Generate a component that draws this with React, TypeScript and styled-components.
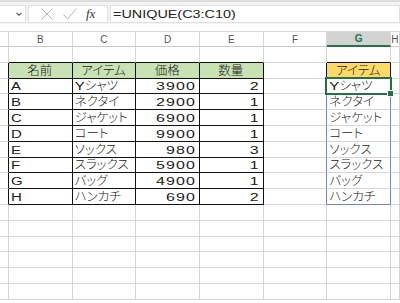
import React from "react";
import styled, { createGlobalStyle } from "styled-components";

const COLUMNS = ["", "B", "C", "D", "E", "F", "G", "H"];
const ROW_COUNT = 16;
const GRID = "#d6d6d6";
const INK = "#111";
const SPILL = "#6a86d2";
const EXCEL_GREEN = "#217346";

const items = [
  ["A", "Yシャツ", "3900", "2"],
  ["B", "ネクタイ", "2900", "1"],
  ["C", "ジャケット", "6900", "1"],
  ["D", "コート", "9900", "1"],
  ["E", "ソックス", "980", "3"],
  ["F", "スラックス", "5900", "1"],
  ["G", "バッグ", "4900", "1"],
  ["H", "ハンカチ", "690", "2"],
];

type Align = "left" | "center" | "right";
type CellData = { text?: string; align?: Align; fill?: string };

// row 1..16, col 0..7 (A..H)
const cellAt = (r: number, c: number): CellData => {
  if (r === 2 && c >= 1 && c <= 4)
    return { text: ["名前", "アイテム", "価格", "数量"][c - 1], align: "center", fill: "#c9e2b4" };
  if (r === 2 && c === 6) return { text: "アイテム", align: "center", fill: "#ffd966" };
  if (r >= 3 && r <= 10) {
    const item = items[r - 3];
    if (c >= 1 && c <= 4) return { text: item[c - 1], align: c >= 3 ? "right" : "left" };
    if (c === 6) return { text: item[1], align: "left" };
  }
  return {};
};

const inTable = (r: number, c: number) => (r >= 2 && r <= 10 && c >= 1 && c <= 4) || (r === 2 && c === 6);
const inSpill = (r: number, c: number) => r >= 3 && r <= 10 && c === 6;

const rightEdge = (r: number, c: number) => {
  if (inTable(r, c) || inTable(r, c + 1)) return INK;
  if (inSpill(r, c) || inSpill(r, c + 1)) return SPILL;
  return GRID;
};

const bottomEdge = (r: number, c: number) => {
  if (inTable(r, c) || inTable(r + 1, c)) return INK;
  if (inSpill(r, c) && r === 10) return SPILL;
  return GRID;
};

const GlobalStyle = createGlobalStyle`
  body {
    margin: 0;
    background: #fff;
    font-family: "Liberation Sans", "Noto Sans CJK JP", sans-serif;
  }
`;

const Page = styled.div`
  width: 400px;
  height: 303px;
  overflow: hidden;
  background: #fff;
`;

const FormulaBar = styled.div`
  display: flex;
  gap: 2px;
  height: 24px;
  box-sizing: border-box;
  padding: 3px 0 1px;
  background: #f3f3f3;
  border-top: 2px solid #dcdcdc;
`;

const Box = styled.div<{ $width?: number }>`
  display: flex;
  align-items: center;
  box-sizing: border-box;
  background: #fff;
  border: 1px solid #e0e0e0;
  ${(p) => (p.$width ? `width: ${p.$width}px; flex: none;` : "flex: 1;")}
`;

const NameBox = styled(Box)`
  justify-content: flex-end;
  padding-right: 3px;
  margin-left: -1px;
`;

const ButtonBox = styled(Box)`
  padding-left: 6px;
`;

const IconSlot = styled.span`
  display: flex;
  align-items: center;
  justify-content: center;
  width: 23px;
  height: 14px;
`;

const Fx = styled.span`
  margin-left: 5px;
  font-family: "Liberation Serif", serif;
  font-style: italic;
  font-size: 13px;
  color: #333;
`;

const FormulaText = styled.span`
  display: inline-block;
  margin-left: 2px;
  font-size: 14.4px;
  color: #222;
  transform: scaleY(0.74);
  white-space: nowrap;
`;

const Gap = styled.div`
  height: 7px;
`;

const Sheet = styled.div`
  display: grid;
  grid-template-columns: 9px repeat(6, 63.67px) 1fr;
  grid-template-rows: 16px repeat(${ROW_COUNT}, 15.8px);
`;

const ColHead = styled.div<{ $active?: boolean }>`
  display: flex;
  align-items: center;
  justify-content: center;
  box-sizing: border-box;
  border-top: 1px solid ${GRID};
  border-right: 1px solid ${GRID};
  border-bottom: ${(p) => (p.$active ? `2px solid ${EXCEL_GREEN}` : "1px solid #c8c8c8")};
  background: ${(p) => (p.$active ? "#d2d2d2" : "#fff")};
  color: ${(p) => (p.$active ? EXCEL_GREEN : "#555")};
  font-size: 10px;
  font-weight: ${(p) => (p.$active ? 700 : 400)};
`;

const Cell = styled.div<{ $align: Align; $fill?: string; $right: string; $bottom: string }>`
  position: relative;
  display: flex;
  align-items: flex-end;
  justify-content: ${(p) => (p.$align === "left" ? "flex-start" : p.$align === "right" ? "flex-end" : "center")};
  box-sizing: border-box;
  padding: 0 3px 1px 2px;
  min-width: 0;
  background: ${(p) => p.$fill ?? "#fff"};
  border-right: 1px solid ${(p) => p.$right};
  border-bottom: 1px solid ${(p) => p.$bottom};
  white-space: nowrap;
  color: #1a1a1a;
`;

const Content = styled.span`
  line-height: 14px;
`;

const Latin = styled.span<{ $num?: boolean }>`
  display: inline-block;
  font-family: "Liberation Sans", sans-serif;
  font-size: ${(p) => (p.$num ? 16 : 15)}px;
  letter-spacing: ${(p) => (p.$num ? 1.1 : 0)}px;
  line-height: 14px;
  transform: scaleY(0.72);
  transform-origin: 50% 12px;
`;

const Kana = styled.span`
  font-family: "Noto Sans CJK JP", sans-serif;
  font-size: 12.5px;
  font-weight: 300;
  font-feature-settings: "palt";
  line-height: 14px;
`;

const Selection = styled.div`
  position: absolute;
  left: -2px;
  top: -2px;
  right: -2px;
  bottom: -2px;
  border: 2px solid ${EXCEL_GREEN};
  z-index: 2;
  pointer-events: none;
`;

const FillHandle = styled.div`
  position: absolute;
  right: -4px;
  bottom: -4px;
  width: 5px;
  height: 5px;
  background: ${EXCEL_GREEN};
  border: 1px solid #fff;
`;

const CellText = ({ text }: { text: string }) => (
  <Content>
    {(text.match(/[\x00-\x7f]+|[^\x00-\x7f]+/g) ?? []).map((run, i) =>
      /^[\x00-\x7f]/.test(run) ? (
        <Latin key={i} $num={/^\d+$/.test(run)}>
          {run}
        </Latin>
      ) : (
        <Kana key={i}>{run}</Kana>
      )
    )}
  </Content>
);

const CancelIcon = () => (
  <svg width="12" height="12" viewBox="0 0 12 12">
    <path d="M0.5 0.5L11.5 11.5M11.5 0.5L0.5 11.5" stroke="#b4b4b4" strokeWidth="1" fill="none" />
  </svg>
);

const EnterIcon = () => (
  <svg width="14" height="12" viewBox="0 0 14 12">
    <path d="M0.5 6.5L4.5 11L13.5 0.5" stroke="#b4b4b4" strokeWidth="1" fill="none" />
  </svg>
);

const Chevron = () => (
  <svg width="6" height="4" viewBox="0 0 6 4">
    <path d="M0.5 0.8L3 3.2L5.5 0.8" stroke="#555" strokeWidth="1.1" fill="none" />
  </svg>
);

const App = () => {
  const rows = Array.from({ length: ROW_COUNT }, (_, i) => i + 1);
  return (
    <Page>
      <GlobalStyle />
      <FormulaBar>
        <NameBox $width={27}>
          <Chevron />
        </NameBox>
        <ButtonBox $width={80}>
          <IconSlot>
            <CancelIcon />
          </IconSlot>
          <IconSlot>
            <EnterIcon />
          </IconSlot>
          <Fx>fx</Fx>
        </ButtonBox>
        <Box>
          <FormulaText>=UNIQUE(C3:C10)</FormulaText>
        </Box>
      </FormulaBar>
      <Gap />
      <Sheet>
        {COLUMNS.map((name, c) => (
          <ColHead key={`h${c}`} $active={name === "G"}>
            {name}
          </ColHead>
        ))}
        {rows.map((r) =>
          COLUMNS.map((_, c) => {
            const data = cellAt(r, c);
            const selected = r === 3 && c === 6;
            return (
              <Cell
                key={`${r}-${c}`}
                $align={data.align ?? "left"}
                $fill={data.fill}
                $right={rightEdge(r, c)}
                $bottom={bottomEdge(r, c)}
              >
                {data.text && <CellText text={data.text} />}
                {selected && (
                  <Selection>
                    <FillHandle />
                  </Selection>
                )}
              </Cell>
            );
          })
        )}
      </Sheet>
    </Page>
  );
};

export default App;
